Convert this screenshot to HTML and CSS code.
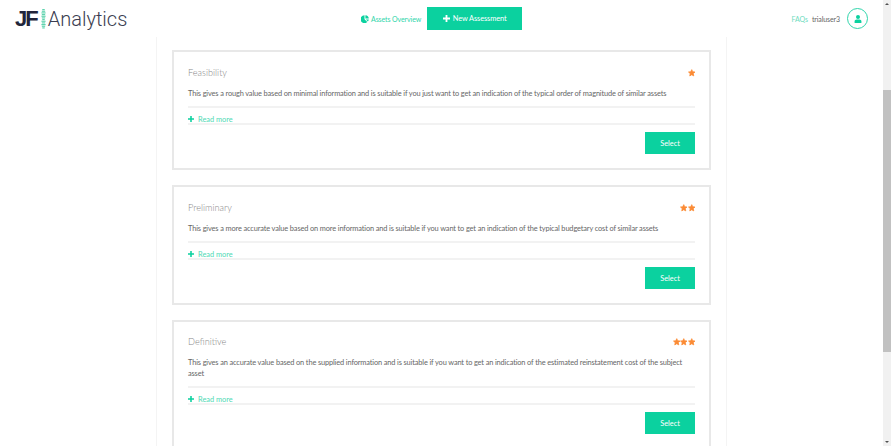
FILE: index.html
```html
<!DOCTYPE html>
<html lang="en">
<head>
<meta charset="utf-8">
<title>JF Analytics</title>
<link rel="stylesheet" href="styles.css">
</head>
<body>
<header class="topbar">
  <a class="logo">
    <span class="logo-jf">JF</span>
    <svg class="logo-wave" width="5" height="24" viewBox="0 0 6 24"><g fill="#5fd3ae"><rect x="1.5" y="0" width="3" height="1.4"/><rect x="1" y="2" width="4" height="1.4"/><rect x="0.5" y="4" width="5" height="1.4"/><rect x="1" y="6" width="4" height="1.4"/><rect x="0.5" y="8" width="5" height="1.4"/><rect x="1" y="10" width="4" height="1.4"/><rect x="1.5" y="12" width="3" height="1.4"/><rect x="0.5" y="14" width="5" height="1.4"/><rect x="1" y="16" width="4" height="1.4"/><rect x="0.5" y="18" width="5" height="1.4"/><rect x="1" y="20" width="4" height="1.4"/><rect x="1.5" y="22" width="3" height="1.4"/></g></svg>
    <span class="logo-text">Analytics</span>
  </a>
  <nav class="nav-center">
    <a class="nav-link">
      <svg width="8" height="8" viewBox="0 0 8 8"><path fill="#0bd19f" d="M3.5 0.2V4.2L6.3 7A4 4 0 1 1 3.5 .2ZM4.4 0.2A3.7 3.7 0 0 1 7.8 3.6H4.4ZM4.9 4.4H7.8A3.7 3.7 0 0 1 6.9 6.4Z"/></svg>
      Assets Overview
    </a>
    <a class="btn btn-new">
      <svg width="7" height="7" viewBox="0 0 7 7"><path fill="#fff" d="M2.6 0H4.4V2.6H7V4.4H4.4V7H2.6V4.4H0V2.6H2.6Z"/></svg>
      New Assessment
    </a>
  </nav>
  <div class="nav-right">
    <a class="faq">FAQs</a>
    <span class="user">trialuser3</span>
    <span class="avatar">
      <svg width="8" height="8" viewBox="0 0 8 8"><circle cx="4" cy="2" r="2" fill="#0bd19f"/><path fill="#0bd19f" d="M0.6 8V6.4C0.6 5.2 1.6 4.5 2.6 4.5H5.4C6.4 4.5 7.4 5.2 7.4 6.4V8Z"/></svg>
    </span>
  </div>
</header>
<main class="column">
  <section class="card">
    <div class="card-head">
      <h2>Feasibility</h2>
      <div class="stars">
        <svg viewBox="0 0 24 24"><path d="M12 2l3 6.8 7.4 .9-5.5 5 1.5 7.3-6.4-3.7-6.4 3.7 1.5-7.3-5.5-5 7.4-.9z"/></svg>
      </div>
    </div>
    <p class="desc">This gives a rough value based on minimal information and is suitable if you just want to get an indication of the typical order of magnitude of similar assets</p>
    <div class="more">
      <svg width="6" height="6" viewBox="0 0 7 7"><path fill="#0bd19f" d="M2.6 0H4.4V2.6H7V4.4H4.4V7H2.6V4.4H0V2.6H2.6Z"/></svg>
      <span>Read more</span>
    </div>
    <div class="actions"><a class="btn btn-select">Select</a></div>
  </section>
  <section class="card">
    <div class="card-head">
      <h2>Preliminary</h2>
      <div class="stars">
        <svg viewBox="0 0 24 24"><path d="M12 2l3 6.8 7.4 .9-5.5 5 1.5 7.3-6.4-3.7-6.4 3.7 1.5-7.3-5.5-5 7.4-.9z"/></svg>
        <svg viewBox="0 0 24 24"><path d="M12 2l3 6.8 7.4 .9-5.5 5 1.5 7.3-6.4-3.7-6.4 3.7 1.5-7.3-5.5-5 7.4-.9z"/></svg>
      </div>
    </div>
    <p class="desc">This gives a more accurate value based on more information and is suitable if you want to get an indication of the typical budgetary cost of similar assets</p>
    <div class="more">
      <svg width="6" height="6" viewBox="0 0 7 7"><path fill="#0bd19f" d="M2.6 0H4.4V2.6H7V4.4H4.4V7H2.6V4.4H0V2.6H2.6Z"/></svg>
      <span>Read more</span>
    </div>
    <div class="actions"><a class="btn btn-select">Select</a></div>
  </section>
  <section class="card">
    <div class="card-head">
      <h2>Definitive</h2>
      <div class="stars">
        <svg viewBox="0 0 24 24"><path d="M12 2l3 6.8 7.4 .9-5.5 5 1.5 7.3-6.4-3.7-6.4 3.7 1.5-7.3-5.5-5 7.4-.9z"/></svg>
        <svg viewBox="0 0 24 24"><path d="M12 2l3 6.8 7.4 .9-5.5 5 1.5 7.3-6.4-3.7-6.4 3.7 1.5-7.3-5.5-5 7.4-.9z"/></svg>
        <svg viewBox="0 0 24 24"><path d="M12 2l3 6.8 7.4 .9-5.5 5 1.5 7.3-6.4-3.7-6.4 3.7 1.5-7.3-5.5-5 7.4-.9z"/></svg>
      </div>
    </div>
    <p class="desc">This gives an accurate value based on the supplied information and is suitable if you want to get an indication of the estimated reinstatement cost of the subject asset</p>
    <div class="more">
      <svg width="6" height="6" viewBox="0 0 7 7"><path fill="#0bd19f" d="M2.6 0H4.4V2.6H7V4.4H4.4V7H2.6V4.4H0V2.6H2.6Z"/></svg>
      <span>Read more</span>
    </div>
    <div class="actions"><a class="btn btn-select">Select</a></div>
  </section>
</main>
<div class="scrollbar" aria-hidden="true">
  <span class="arrow arrow-up"></span>
  <span class="thumb"></span>
  <span class="arrow arrow-down"></span>
</div>
</body>
</html>
```
FILE: styles.css
```css
* { box-sizing: border-box; }
html, body { height: 100%; }
body {
  margin: 0;
  height: 446px;
  overflow: hidden;
  background: #fff;
  font-family: Lato, "Open Sans", sans-serif;
  color: #555;
}
.topbar {
  display: flex;
  align-items: center;
  height: 37px;
  padding: 0 23px 0 15px;
  position: relative;
}
.logo { display: flex; align-items: center; width: 346px; }
.logo-jf {
  font-family: "Liberation Sans", sans-serif;
  font-weight: 700;
  font-size: 22px;
  letter-spacing: -2px;
  color: #22253a;
  line-height: 1;
}
.logo-wave { margin: 0 2px 0 4px; }
.logo-text {
  font-family: Roboto, sans-serif;
  font-weight: 300;
  font-size: 20px;
  color: #3a3d50;
  line-height: 1;
  margin-top: 1px;
}
.nav-center { display: flex; align-items: center; gap: 6px; }
.nav-link {
  display: flex;
  align-items: center;
  gap: 2px;
  font-size: 7px;
  letter-spacing: -0.1px;
  color: #2fd5ab;
}
.btn {
  display: flex;
  align-items: center;
  justify-content: center;
  background: #0bd19f;
  color: #fff;
}
.btn-new {
  width: 95px;
  height: 23px;
  gap: 3px;
  font-size: 7.4px;
  letter-spacing: -0.1px;
}
.nav-right {
  margin-left: auto;
  display: flex;
  align-items: center;
  font-size: 7px;
  letter-spacing: -0.1px;
}
.faq { color: #6fdcc0; margin-right: 4px; }
.user { color: #666; margin-right: 7px; }
.avatar {
  width: 21px;
  height: 21px;
  border: 1.5px solid #2fd5ab;
  border-radius: 50%;
  display: flex;
  align-items: center;
  justify-content: center;
}
.column {
  width: 571px;
  margin-left: 156px;
  min-height: 409px;
  padding: 13px 0 0 15px;
  border-left: 1px solid #f4f4f4;
  border-right: 1px solid #f4f4f4;
}
.card {
  width: 539px;
  height: 120px;
  border: 2px solid #e8e8e8;
  padding: 13px 14px 0;
  margin-bottom: 15px;
  background: #fff;
}
.card:last-child { height: 160px; margin-bottom: 0; padding-top: 12px; }
.card-head {
  display: flex;
  justify-content: space-between;
  align-items: center;
  height: 14px;
}
h2 {
  margin: 0;
  font-size: 9.2px;
  font-weight: 300;
  color: #888;
}
.stars { display: flex; gap: 0; margin-top: 1px; }
.stars svg {
  display: block;
  width: 7.5px;
  height: 7.5px;
  fill: #fb8b35;
  stroke: #fb8b35;
  stroke-width: 2.5;
  stroke-linejoin: round;
  overflow: visible;
}
.desc {
  margin: 9px 0 0;
  padding-bottom: 7px;
  font-size: 7.4px;
  letter-spacing: -0.13px;
  line-height: 11px;
  color: #666;
  border-bottom: 2px solid #f2f2f2;
}
.more {
  display: flex;
  align-items: center;
  gap: 4px;
  height: 17px;
  padding-top: 7px;
  font-size: 7.4px;
  color: #4fd9b5;
  border-bottom: 2px solid #f2f2f2;
}
.actions { display: flex; justify-content: flex-end; margin-top: 7px; }
.btn-select { width: 50px; height: 22px; font-size: 7.4px; }
.scrollbar {
  position: fixed;
  top: 0;
  right: 0;
  width: 8px;
  height: 446px;
  background: #f1f1f1;
}
.thumb {
  position: absolute;
  top: 90px;
  left: 0;
  width: 8px;
  height: 262px;
  background: #c1c1c1;
}
.arrow {
  position: absolute;
  left: 2px;
  width: 0;
  height: 0;
  border-left: 2px solid transparent;
  border-right: 2px solid transparent;
}
.arrow-up { top: 3px; border-bottom: 2px solid #505050; }
.arrow-down { bottom: 3px; border-top: 2px solid #505050; }
```
